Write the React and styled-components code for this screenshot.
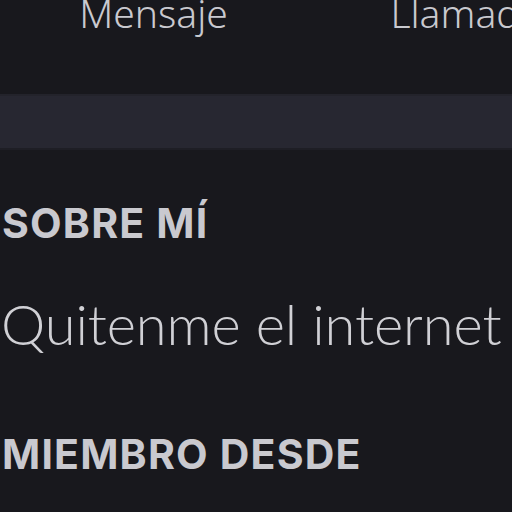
import styled, { createGlobalStyle } from "styled-components";

const GlobalStyle = createGlobalStyle`
  html, body {
    margin: 0;
    padding: 0;
    background: #18181d;
    overflow: hidden;
  }
  body {
    font-family: "Noto Sans", "Open Sans", sans-serif;
    color: #c9c9cf;
  }
`;

const Screen = styled.div`
  width: 512px;
  height: 512px;
  overflow: hidden;
  background: #18181d;
`;

const Actions = styled.div`
  display: grid;
  grid-template-columns: 307px 317px 307px;
  margin-top: -7px;
`;

const ActionButton = styled.div`
  display: flex;
  justify-content: center;
  font-size: 39px;
  line-height: 39px;
  font-weight: 300;
  white-space: nowrap;
  color: #c9c9cf;
`;

const Divider = styled.div`
  margin-top: 62px;
  height: 56px;
  background: #272731;
  border-top: 2px solid #23232b;
  border-bottom: 2px solid #1e1e25;
  box-sizing: border-box;
`;

const Section = styled.section`
  padding: ${(p) => p.$top}px 3px 0;
`;

const Heading = styled.h2`
  margin: 0 0 0 -1px;
  font-family: Inter, "Noto Sans", sans-serif;
  font-size: 41px;
  line-height: 41px;
  font-weight: 700;
  letter-spacing: 1.2px;
  text-transform: uppercase;
  color: #c9c9cf;
`;

const Body = styled.p`
  margin: 52px 0 0 -2px;
  font-family: Lato, "Noto Sans", sans-serif;
  font-size: 56px;
  line-height: 56px;
  font-weight: 300;
  letter-spacing: -0.1px;
  white-space: nowrap;
  color: #d0d0d5;
`;

const App = () => {
  return (
    <Screen>
      <GlobalStyle />
      <Actions>
        <ActionButton>Mensaje</ActionButton>
        <ActionButton>Llamada</ActionButton>
        <ActionButton>Vídeo</ActionButton>
      </Actions>
      <Divider />
      <Section $top={53}>
        <Heading>Sobre mí</Heading>
        <Body>Quitenme el internet</Body>
      </Section>
      <Section $top={82}>
        <Heading>Miembro desde</Heading>
      </Section>
    </Screen>
  );
};

export default App;
